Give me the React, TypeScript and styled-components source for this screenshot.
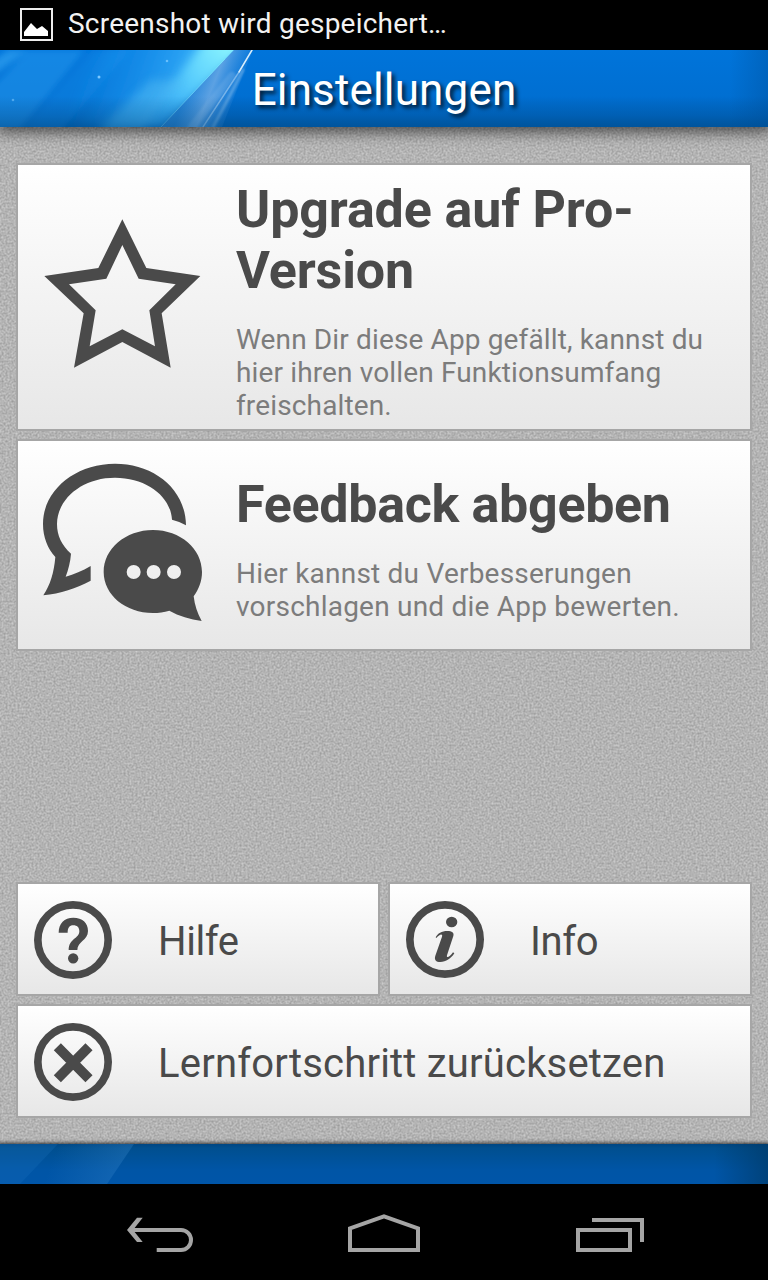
import React from "react";
import styled, { createGlobalStyle } from "styled-components";

const ink = "#4a4a4a";

const GlobalStyle = createGlobalStyle`
  * { box-sizing: border-box; }
  html, body { margin: 0; padding: 0; background: #000; }
  body { font-family: Roboto, "Liberation Sans", sans-serif; }
`;

const Screen = styled.div`
  width: 768px;
  height: 1280px;
  display: flex;
  flex-direction: column;
  overflow: hidden;
  background: #000;
`;

const StatusBar = styled.div`
  flex: none;
  height: 50px;
  display: flex;
  align-items: center;
  gap: 15px;
  padding: 0 0 3px 19px;
  color: #f2f2f2;
  font-size: 28px;
  line-height: 33px;
  white-space: nowrap;
`;

const StatusText = styled.span`
  letter-spacing: 0.22px;
`;

const Header = styled.header`
  flex: none;
  height: 77px;
  position: relative;
  z-index: 1;
  display: flex;
  justify-content: center;
  background: #0072d8;
  box-shadow: 0 2px 14px 3px rgba(0, 0, 0, 0.6);
  clip-path: inset(0 0 -30px 0);
`;

const Backdrop = styled.svg`
  position: absolute;
  inset: 0;
  width: 100%;
  height: 100%;
  display: block;
`;

const HeaderTitle = styled.h1`
  position: relative;
  margin: 0;
  padding-top: 14px;
  font-size: 44px;
  line-height: 52px;
  font-weight: 400;
  letter-spacing: 0.15px;
  color: #fff;
  white-space: nowrap;
  text-shadow: 3px 3px 4px rgba(0, 0, 0, 0.8);
`;

const Content = styled.main`
  flex: 1;
  min-height: 0;
  position: relative;
  background: #b2b2b2;
  display: flex;
  flex-direction: column;
  gap: 8px;
  padding: 36px 16px 26px;
`;

const Card = styled.section<{ $height: number; $top: number }>`
  position: relative;
  flex: none;
  height: ${(p) => p.$height}px;
  padding-top: ${(p) => p.$top}px;
  display: flex;
  border: 2px solid #a6a6a6;
  background: linear-gradient(#ffffff, #e7e7e7) padding-box;
`;

const CardIcon = styled.svg<{ $top: number }>`
  flex: none;
  width: 160px;
  height: 160px;
  margin: ${(p) => p.$top}px 34px 0 24px;
  fill: ${ink};
  overflow: visible;
`;

const CardText = styled.div`
  display: flex;
  flex-direction: column;
  gap: 22px;
  white-space: nowrap;
`;

const CardTitle = styled.h2<{ $tracking: number }>`
  margin: 0;
  color: ${ink};
  font-size: 52px;
  line-height: 61px;
  font-weight: 700;
  letter-spacing: ${(p) => p.$tracking}px;
`;

const CardBody = styled.p<{ $tracking: number }>`
  margin: 0;
  color: #7c7c7c;
  font-size: 28px;
  line-height: 33px;
  letter-spacing: ${(p) => p.$tracking}px;
`;

const Spacer = styled.div`
  flex: 1;
`;

const ButtonRow = styled.div`
  position: relative;
  flex: none;
  display: flex;
  gap: 8px;
`;

const Button = styled.button<{ $tracking: number }>`
  flex: 1;
  height: 114px;
  display: flex;
  align-items: center;
  gap: 46px;
  padding: 2px 0 0 16px;
  margin: 0;
  border: 2px solid #a6a6a6;
  border-radius: 0;
  background: linear-gradient(#ffffff, #e7e7e7) padding-box;
  color: ${ink};
  font-family: inherit;
  font-size: 40px;
  line-height: 47px;
  letter-spacing: ${(p) => p.$tracking}px;
  white-space: nowrap;
`;

const ButtonLabel = styled.span`
  padding-top: 2px;
`;

const RoundIcon = styled.svg`
  flex: none;
  width: 78px;
  height: 78px;
  display: block;
`;

const Footer = styled.footer`
  flex: none;
  position: relative;
  height: 40px;
  box-shadow: 0 0 4px 1px rgba(0, 0, 0, 0.75);
`;

const NavBar = styled.nav`
  flex: none;
  position: relative;
  height: 96px;
  background: #000;
`;

function Texture() {
  return (
    <Backdrop aria-hidden="true">
      <filter id="grain" x="0" y="0" width="100%" height="100%" colorInterpolationFilters="sRGB">
        <feTurbulence type="fractalNoise" baseFrequency="0.5" numOctaves="2" seed="8" />
        <feColorMatrix
          values="0.28 0 0 0 0.565
                  0.28 0 0 0 0.565
                  0.28 0 0 0 0.565
                  0 0 0 0 1"
        />
      </filter>
      <rect width="100%" height="100%" filter="url(#grain)" />
    </Backdrop>
  );
}

function HeaderArt() {
  return (
    <Backdrop viewBox="0 0 768 77" preserveAspectRatio="none" aria-hidden="true">
      <defs>
        <linearGradient id="hBase" x1="0" y1="0" x2="0" y2="1">
          <stop offset="0" stopColor="#0074da" />
          <stop offset="0.6" stopColor="#006fd2" />
          <stop offset="0.85" stopColor="#0065c2" />
          <stop offset="1" stopColor="#005aaa" />
        </linearGradient>
        <linearGradient id="hBeam" gradientUnits="userSpaceOnUse" x1="90" y1="0" x2="197" y2="38">
          <stop offset="0" stopColor="#28b0ff" stopOpacity="0" />
          <stop offset="0.35" stopColor="#28a4fa" stopOpacity="0.4" />
          <stop offset="0.75" stopColor="#3cb6ff" stopOpacity="0.65" />
          <stop offset="1" stopColor="#4cc4ff" stopOpacity="0.9" />
        </linearGradient>
        <linearGradient id="hBeam2" gradientUnits="userSpaceOnUse" x1="192" y1="30" x2="242" y2="50">
          <stop offset="0" stopColor="#4c9ce0" stopOpacity="0.5" />
          <stop offset="0.4" stopColor="#7bb2e8" stopOpacity="0.75" />
          <stop offset="1" stopColor="#3a90e0" stopOpacity="0" />
        </linearGradient>
        <linearGradient id="hFoot" x1="0" y1="0" x2="0" y2="1">
          <stop offset="0.6" stopColor="#00508c" stopOpacity="0" />
          <stop offset="1" stopColor="#004c88" stopOpacity="0.4" />
        </linearGradient>
        <linearGradient id="hSide" x1="0" y1="0" x2="1" y2="0">
          <stop offset="0.95" stopColor="#004a90" stopOpacity="0" />
          <stop offset="1" stopColor="#004a90" stopOpacity="0.35" />
        </linearGradient>
        <linearGradient id="hGlow" gradientUnits="userSpaceOnUse" x1="230" y1="0" x2="165" y2="70">
          <stop offset="0" stopColor="#8cf6ff" stopOpacity="0.95" />
          <stop offset="0.5" stopColor="#6adcff" stopOpacity="0.65" />
          <stop offset="1" stopColor="#5accff" stopOpacity="0.1" />
        </linearGradient>
        <clipPath id="hLeft">
          <path d="M0 0H234L161 77H0Z" />
        </clipPath>
        <filter id="soft" x="-20%" y="-20%" width="140%" height="140%">
          <feGaussianBlur stdDeviation="3" />
        </filter>
        <filter id="wide" x="-20%" y="-20%" width="140%" height="140%">
          <feGaussianBlur stdDeviation="5" />
        </filter>
        <filter id="faint" x="-20%" y="-20%" width="140%" height="140%">
          <feGaussianBlur stdDeviation="0.8" />
        </filter>
      </defs>
      <rect width="768" height="77" fill="url(#hBase)" />
      <g filter="url(#soft)">
        <polygon points="28,0 85,0 20,80 -50,80" fill="#2aa0f2" opacity="0.45" />
        <polygon points="8,0 28,0 -20,36 -20,20" fill="#38a8f4" opacity="0.6" />
        <polygon points="92,0 130,0 62,80 22,80" fill="#1e96f0" opacity="0.3" />
      </g>
      <g clipPath="url(#hLeft)">
        <polygon points="110,-10 244,-10 161,77 50,77" fill="url(#hBeam)" filter="url(#wide)" />
        <polygon points="206,-10 250,-10 166,82 138,77" fill="url(#hGlow)" filter="url(#wide)" />
        <polygon points="150,30 182,30 140,84 95,84" fill="#58c0f4" opacity="0.45" filter="url(#wide)" />
      </g>
      <polygon points="234,0 253,0 222,77 161,77" fill="url(#hBeam2)" />
      <g fill="none" strokeLinecap="round">
        <path d="M252 0L239 22" stroke="#eef9ff" strokeWidth="1.5" opacity="0.9" />
        <path d="M239 22L203 77" stroke="#c5e2fa" strokeWidth="1.4" opacity="0.5" />
        <path d="M243 20Q230 46 213 77" stroke="#a9d2f4" strokeWidth="3" opacity="0.4" filter="url(#faint)" />
        <path d="M232 26L192 77" stroke="#a9cdf0" strokeWidth="8" opacity="0.22" filter="url(#faint)" />
        <path d="M225 9L161 77" stroke="#9bf4ff" strokeWidth="1" opacity="0.4" />
      </g>
      <g fill="#7cc8ff">
        <circle cx="167" cy="11" r="1.3" opacity="0.8" />
        <circle cx="99" cy="27" r="1.5" />
        <circle cx="13" cy="50" r="1.3" opacity="0.6" />
      </g>
      <rect width="768" height="77" fill="url(#hFoot)" />
      <rect width="768" height="77" fill="url(#hSide)" />
    </Backdrop>
  );
}

function FooterArt() {
  return (
    <Backdrop viewBox="0 0 768 40" preserveAspectRatio="none" aria-hidden="true">
      <defs>
        <linearGradient id="fBase" x1="0" y1="0" x2="0" y2="1">
          <stop offset="0" stopColor="#004682" />
          <stop offset="0.1" stopColor="#004f8f" />
          <stop offset="0.65" stopColor="#0055a6" />
          <stop offset="1" stopColor="#0055a8" />
        </linearGradient>
        <linearGradient id="fBeam" gradientUnits="userSpaceOnUse" x1="55" y1="8" x2="118" y2="30">
          <stop offset="0" stopColor="#3a88cc" stopOpacity="0" />
          <stop offset="1" stopColor="#3a88cc" stopOpacity="0.3" />
        </linearGradient>
        <linearGradient id="fSide" x1="0" y1="0" x2="1" y2="0">
          <stop offset="0.93" stopColor="#003a68" stopOpacity="0" />
          <stop offset="1" stopColor="#003a68" stopOpacity="0.7" />
        </linearGradient>
      </defs>
      <rect width="768" height="40" fill="url(#fBase)" />
      <polygon points="0,0 58,0 20,40 0,40" fill="#1c74c0" opacity="0.25" />
      <polygon points="58,0 134,0 107,40 20,40" fill="url(#fBeam)" />
      <rect width="768" height="40" fill="url(#fSide)" />
    </Backdrop>
  );
}

export default function App() {
  return (
    <>
      <GlobalStyle />
      <Screen>
        <StatusBar>
          <svg width="34" height="34" viewBox="0 0 34 34">
            <rect x="2" y="2" width="31" height="31" fill="none" stroke="#eee" strokeWidth="2" />
            <path d="M5 29V25L12 16L18 22L23 19L29 24V29Z" fill="#fff" />
          </svg>
          <StatusText>Screenshot wird gespeichert…</StatusText>
        </StatusBar>

        <Header>
          <HeaderArt />
          <HeaderTitle>Einstellungen</HeaderTitle>
        </Header>

        <Content>
          <Texture />
          <Card $height={268} $top={14}>
            <CardIcon $top={38} viewBox="78 171 480 480">
              <path
                fillRule="evenodd"
                d="M319 178L391 324L553 348L437 460L464 623L319 546L174 623L203 460L85 348L247 324ZM319 255L271 356L159 373L239 451L221 559L319 508L417 559L400 451L479 373L368 356Z"
              />
            </CardIcon>
            <CardText>
              <CardTitle $tracking={-0.13}>
                Upgrade auf Pro-
                <br />
                Version
              </CardTitle>
              <CardBody $tracking={0.14}>
                Wenn Dir diese App gefällt, kannst du
                <br />
                hier ihren vollen Funktionsumfang
                <br />
                freischalten.
              </CardBody>
            </CardText>
          </Card>

          <Card $height={212} $top={33}>
            <CardIcon $top={-12} viewBox="78 78 480 480">
              <path d="M510 268C508 155 410 83 297 83C178 83 81 162 81 264C81 304 95 338 118 363C114 410 103 446 82 478C133 473 181 457 224 434V390C199 405 174 415 149 422C157 401 163 378 165 353C137 327 123 299 123 264C124 187 200 125 297 125C392 125 464 181 468 251Q490 256 510 268Z" />
              <path
                fillRule="evenodd"
                d="M411 282C493 282 558 338 558 408C558 436 548 460 533 481C536 508 544 532 557 555C522 550 489 540 460 524C444 529 428 531 411 531C329 531 263 477 263 408C263 338 329 282 411 282ZM374 408A21 21 0 1 0 332 408A21 21 0 1 0 374 408ZM434 408A21 21 0 1 0 392 408A21 21 0 1 0 434 408ZM495 408A21 21 0 1 0 453 408A21 21 0 1 0 495 408Z"
              />
            </CardIcon>
            <CardText>
              <CardTitle $tracking={-0.31}>Feedback abgeben</CardTitle>
              <CardBody $tracking={0.22}>
                Hier kannst du Verbesserungen
                <br />
                vorschlagen und die App bewerten.
              </CardBody>
            </CardText>
          </Card>

          <Spacer />

          <ButtonRow>
            <Button $tracking={-0.4}>
              <RoundIcon viewBox="72 93 234 234" fill={ink}>
                <circle cx="189" cy="210" r="105.5" fill="none" stroke={ink} strokeWidth="23" />
                <path d="M146 188C146 160 163 143 190 143C217 143 234 158 234 183C234 211 202 215 202 240H176C176 206 208 206 208 184C208 172 201 166 190 166C178 166 173 174 173 188Z" />
                <circle cx="189.5" cy="265" r="15.5" />
              </RoundIcon>
              <ButtonLabel>Hilfe</ButtonLabel>
            </Button>
            <Button $tracking={-0.4}>
              <RoundIcon viewBox="78 93 234 234" fill={ink}>
                <ellipse cx="195" cy="208.5" rx="105.5" ry="104" fill="none" stroke={ink} strokeWidth="23" />
                <ellipse cx="215" cy="156" rx="17" ry="15.5" />
                <path d="M167 202C173 190 185 183 202 183C216 183 223 188 220 198L201 256C198 266 210 261 219 247L223 250C213 266 198 276 181 276C168 276 162 269 166 257L186 200C189 190 179 192 169 204Z" />
              </RoundIcon>
              <ButtonLabel>Info</ButtonLabel>
            </Button>
          </ButtonRow>
          <ButtonRow>
            <Button $tracking={0.19}>
              <RoundIcon viewBox="72 459 234 234">
                <circle cx="189" cy="576" r="105.5" fill="none" stroke={ink} strokeWidth="23" />
                <path d="M142 530L237 626M237 530L142 626" stroke={ink} strokeWidth="30" />
              </RoundIcon>
              <ButtonLabel>Lernfortschritt zurücksetzen</ButtonLabel>
            </Button>
          </ButtonRow>
        </Content>

        <Footer>
          <FooterArt />
        </Footer>

        <NavBar>
          <svg width="768" height="96" viewBox="0 1184 768 96" fill="none" stroke="#a5a5a5" strokeWidth="4">
            <path d="M131 1230H181A10 10 0 0 1 181 1250H156.7" />
            <path d="M127 1230L137 1217.7H142.7L133 1230L142.7 1242H137Z" fill="#a5a5a5" stroke="none" />
            <path d="M350 1250V1228.3L384 1216.3L418 1228.3V1250Z" />
            <path d="M578 1230H630V1250H578ZM592 1220H642V1242" />
          </svg>
        </NavBar>
      </Screen>
    </>
  );
}
